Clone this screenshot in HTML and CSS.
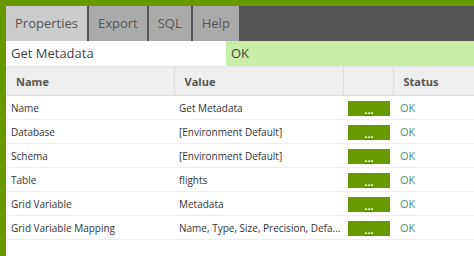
FILE: index.html
```html
<!DOCTYPE html>
<html lang="en">
<head>
  <meta charset="UTF-8" />
  <title>Properties</title>
  <link rel="stylesheet" href="styles.css">
</head>
<body>
  <div class="panel">
    <div class="tabs">
      <div class="tab active">Properties</div>
      <div class="tab">Export</div>
      <div class="tab">SQL</div>
      <div class="tab">Help</div>
    </div>

    <div class="summary">
      <div class="summary-name">Get Metadata</div>
      <div class="summary-status">OK</div>
    </div>

    <table class="props">
      <colgroup>
        <col class="c-name">
        <col class="c-value">
        <col class="c-btn">
        <col>
      </colgroup>
      <thead>
        <tr>
          <th>Name</th>
          <th>Value</th>
          <th></th>
          <th>Status</th>
        </tr>
      </thead>
      <tbody>
        <tr>
          <td>Name</td>
          <td>Get Metadata</td>
          <td><button class="edit">...</button></td>
          <td class="ok">OK</td>
        </tr>
        <tr>
          <td>Database</td>
          <td>[Environment Default]</td>
          <td><button class="edit">...</button></td>
          <td class="ok">OK</td>
        </tr>
        <tr>
          <td>Schema</td>
          <td>[Environment Default]</td>
          <td><button class="edit">...</button></td>
          <td class="ok">OK</td>
        </tr>
        <tr>
          <td>Table</td>
          <td>flights</td>
          <td><button class="edit">...</button></td>
          <td class="ok">OK</td>
        </tr>
        <tr>
          <td>Grid Variable</td>
          <td>Metadata</td>
          <td><button class="edit">...</button></td>
          <td class="ok">OK</td>
        </tr>
        <tr>
          <td>Grid Variable Mapping</td>
          <td>Name, Type, Size, Precision, Defa...</td>
          <td><button class="edit">...</button></td>
          <td class="ok">OK</td>
        </tr>
      </tbody>
    </table>
  </div>
</body>
</html>
```

FILE: styles.css
```css
* {
  box-sizing: border-box;
  margin: 0;
  padding: 0;
}

body {
  font-family: 'Open Sans', sans-serif;
  background: #ffffff;
  color: #333333;
}

.panel {
  border-top: 6px solid #669900;
  border-left: 6px solid #669900;
  min-height: 256px;
}

.tabs {
  display: flex;
  gap: 2px;
  height: 35px;
  background: #555555;
}

.tab {
  background: #aaaaaa;
  color: #555555;
  font-size: 13px;
  line-height: 35px;
  padding: 0 9px;
}

.tab.active {
  background: #cccccc;
}

.summary {
  display: flex;
  height: 25px;
  font-size: 13px;
  line-height: 25px;
  color: #444444;
}

.summary-name {
  width: 220px;
  padding-left: 5px;
  background: #ffffff;
}

.summary-status {
  flex: 1;
  padding-left: 5px;
  background: #c8eea8;
}

.props {
  width: 100%;
  border-collapse: collapse;
  table-layout: fixed;
}

.c-name {
  width: 168px;
}

.c-value {
  width: 169px;
}

.c-btn {
  width: 50px;
}

.props th {
  height: 29px;
  background: #eeeeee;
  color: #555555;
  font-size: 11px;
  font-weight: bold;
  text-align: left;
  padding-left: 10px;
  border-top: 1px solid #e4e4e4;
  border-right: 1px solid #dddddd;
  border-bottom: 1px solid #dddddd;
}

.props th:last-child {
  border-right: none;
}

.props td {
  height: 24px;
  font-size: 10px;
  padding-left: 5px;
  border-bottom: 1px solid #eeeeee;
  white-space: nowrap;
  overflow: hidden;
}

.props td.ok {
  color: #4a8f75;
  font-size: 11px;
  padding-left: 7px;
}

.edit {
  display: block;
  width: 42px;
  height: 15px;
  margin-top: 1px;
  padding: 0;
  background: #669900;
  color: #ffffff;
  border: none;
  font-family: 'Open Sans', sans-serif;
  font-size: 11px;
  font-weight: bold;
  line-height: 17px;
}
```
